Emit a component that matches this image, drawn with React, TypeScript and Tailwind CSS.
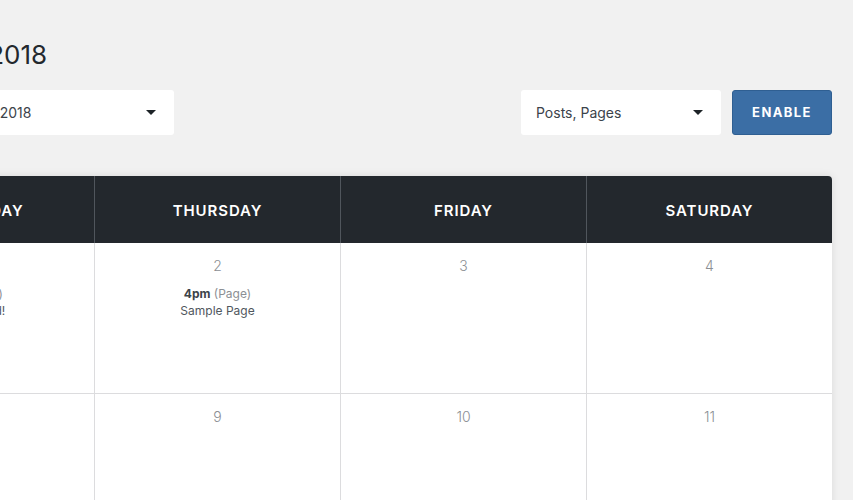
import React from "react";

const days = ["Sunday", "Monday", "Tuesday", "Wednesday", "Thursday", "Friday", "Saturday"];
const weeks: (number | null)[][] = [
  [29, 30, 31, 1, 2, 3, 4],
  [5, 6, 7, 8, 9, 10, 11],
];

type Ev = { time: string; type: string; title: string };
const events: Record<number, Ev> = {
  1: { time: "9am", type: "Post", title: "Hello world!" },
  2: { time: "4pm", type: "Page", title: "Sample Page" },
};

function Caret() {
  return (
    <svg width="10" height="5" viewBox="0 0 10 5" className="shrink-0">
      <path d="M0 0h10L5 5z" fill="#1d2327" />
    </svg>
  );
}

export default function App() {
  return (
    <div className="h-[500px] w-[853px] overflow-hidden bg-[#f1f1f1] font-['Inter',sans-serif]">
      <div className="ml-[-890px] w-[1722px] pt-[36px]">
        <h1 className="pr-[1px] text-center text-[26px] leading-[38px] font-normal text-[#23282d]">August 2018</h1>
        <div className="mt-[16px] flex h-[45px] items-center">
          <div className="ml-[824px] flex h-[45px] w-[240px] items-center justify-between rounded-[3px] bg-white pl-[15px] pr-[18px] text-[14px] text-[#3c434a]">
            <span>August 2018</span>
            <Caret />
          </div>
          <div className="ml-auto flex items-center gap-[11px]">
            <div className="flex h-[45px] w-[200px] items-center justify-between rounded-[3px] bg-white pl-[15px] pr-[18px] text-[14px] text-[#3c434a]">
              <span>Posts, Pages</span>
              <Caret />
            </div>
            <button className="h-[45px] w-[100px] rounded-[3px] border border-[#2f5f92] bg-[#3b6ea5] text-[13px] font-bold tracking-[1.4px] text-white">
              ENABLE
            </button>
          </div>
        </div>
        <div className="mt-[41px] rounded-t-[4px] bg-white shadow-[0_0_8px_rgba(0,0,0,0.10)]">
          <div className="grid h-[67px] grid-cols-7 rounded-t-[4px] bg-[#23282d]">
            {days.map((d, i) => (
              <div
                key={d}
                className={`flex items-center justify-center pt-[3px] text-[15px] font-semibold uppercase tracking-[0.9px] text-white ${i > 0 ? "border-l border-[#50565c]" : ""}`}
              >
                {d}
              </div>
            ))}
          </div>
          {weeks.map((w, wi) => (
            <div key={wi} className="grid grid-cols-7 border-b border-[#dcdcde]">
              {w.map((n, i) => {
                const ev = n !== null && wi === 0 && n < 5 ? events[n] : undefined;
                return (
                  <div
                    key={i}
                    className={`flex h-[150px] flex-col items-center pt-[13px] ${i > 0 ? "border-l border-[#dcdcde]" : ""}`}
                  >
                    <span className="text-[14px] leading-[20px] font-light text-[#8c8f94]">{n}</span>
                    {ev && (
                      <div className="mt-[9px] flex flex-col items-center text-[12px] leading-[17px] text-[#50575e]">
                        <span>
                          <b className="font-bold text-[#3c434a]">{ev.time}</b>{" "}
                          <span className="text-[#8c8f94]">({ev.type})</span>
                        </span>
                        <span>{ev.title}</span>
                      </div>
                    )}
                  </div>
                );
              })}
            </div>
          ))}
        </div>
      </div>
    </div>
  );
}
